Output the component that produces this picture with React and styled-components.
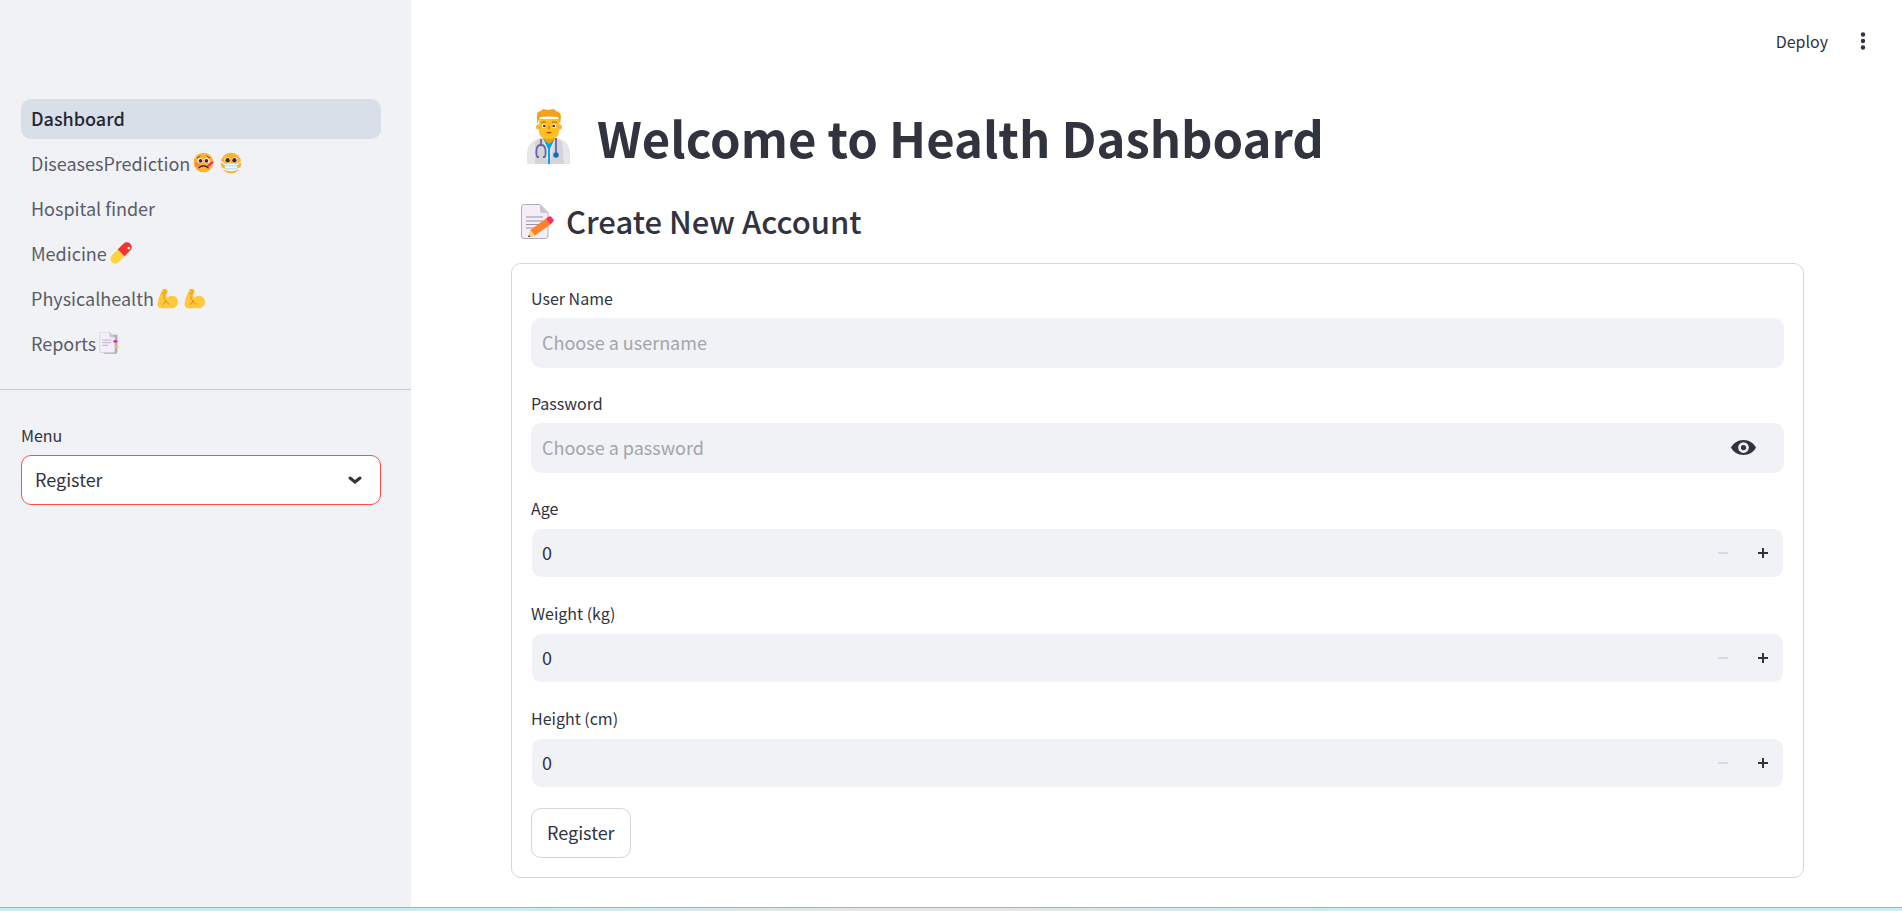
import React from "react";
import styled, { createGlobalStyle, css } from "styled-components";

const ink = "#31333f";
const fill = "#f0f2f6";
const line = "#d6d6d8";

const GlobalStyle = createGlobalStyle`
  * { box-sizing: border-box; }
  body {
    margin: 0;
    background: #fff;
    color: ${ink};
    font-family: "Noto Sans CJK SC", "Open Sans", sans-serif;
    font-size: 18px;
    line-height: 26px;
  }
  input, select, button { font: inherit; color: inherit; }
`;

const Shell = styled.div`
  display: flex;
  flex-direction: column;
  min-height: 100vh;
`;

const Body = styled.div`
  display: flex;
  flex: 1;
`;

const Sidebar = styled.aside`
  flex: 0 0 411px;
  background: ${fill};
  padding-top: 99px;
`;

const NavList = styled.nav`
  display: flex;
  flex-direction: column;
  gap: 5px;
  padding: 0 30px 25px 21px;
  border-bottom: 1px solid #c9cbd1;
`;

const NavLink = styled.a`
  display: flex;
  align-items: center;
  gap: 3px;
  height: 40px;
  padding: 0 10px 2px;
  border-radius: 10px;
  color: #5a5c68;
  text-decoration: none;
  ${(p) =>
    p.$active &&
    css`
      background: #d9dfe9;
      color: #262730;
      font-weight: 500;
    `}
`;

const Emojis = styled.span`
  display: flex;
  gap: 6px;
`;

const MenuBlock = styled.div`
  padding: 31px 30px 0 21px;
`;

const Label = styled.label`
  display: block;
  height: 34px;
  font-size: 16px;
  line-height: 28px;
`;

const SelectBox = styled.div`
  display: grid;
  align-items: center;
  > * { grid-area: 1 / 1; }
  svg { justify-self: end; margin-right: 17px; pointer-events: none; }
`;

const Select = styled.select`
  appearance: none;
  width: 100%;
  height: 50px;
  padding: 0 13px 2px;
  border: 1px solid #ff4b4b;
  border-radius: 10px;
  background: #fff;
`;

const Main = styled.main`
  flex: 1;
  min-width: 0;
  padding-bottom: 29px;
`;

const Toolbar = styled.header`
  display: flex;
  justify-content: flex-end;
  align-items: center;
  gap: 24px;
  height: 83px;
  padding: 0 28px 2px 0;
`;

const PlainButton = styled.button`
  display: flex;
  align-items: center;
  padding: 0;
  border: 0;
  background: none;
  font-size: 16px;
`;

const Content = styled.div`
  padding: 0 98px 0 100px;
`;

const Title = styled.h1`
  display: flex;
  align-items: center;
  gap: 26px;
  height: 110px;
  margin: 0;
  padding: 0 0 2px 16px;
  font-size: 49px;
  font-weight: 700;
  line-height: 66px;
`;

const Subtitle = styled.h2`
  display: flex;
  align-items: center;
  gap: 12px;
  height: 58px;
  margin: 0 0 12px;
  padding: 0 0 2px 10px;
  font-size: 31px;
  font-weight: 500;
  line-height: 42px;
`;

const Card = styled.form`
  display: flex;
  flex-direction: column;
  gap: 20px;
  padding: 20px 19px 19px;
  border: 1px solid ${line};
  border-radius: 10px;
`;

const Fields = styled.div`
  display: grid;
  gap: 21px;
`;

const Field = styled.div`
  min-width: 0;
`;

const InputBox = styled.div`
  display: flex;
  align-items: center;
  height: 50px;
  padding-right: ${(p) => p.$end}px;
  border: ${(p) => (p.$inset ? "1px solid #fff" : "0")};
  border-radius: 10px;
  background: ${fill};
  background-clip: padding-box;
`;

const Input = styled.input`
  flex: 1;
  min-width: 0;
  height: 48px;
  padding: 0 0 2px ${(p) => (p.$inset ? 10 : 11)}px;
  border: 0;
  background: none;
  outline: none;
  &::placeholder { color: #a3a5ad; opacity: 1; }
`;

const IconButton = styled.button`
  display: flex;
  align-items: center;
  justify-content: center;
  width: ${(p) => p.$w}px;
  height: 48px;
  padding: 0;
  border: 0;
  background: none;
  color: ${(p) => (p.disabled ? "#d5dae5" : ink)};
`;

const SubmitButton = styled.button`
  align-self: flex-start;
  height: 50px;
  padding: 0 15px 2px;
  border: 1px solid ${line};
  border-radius: 10px;
  background: #fff;
`;

const BottomStrip = styled.div`
  height: 4px;
  border-top: 1px solid #a3b5b9;
  background: linear-gradient(90deg, #c9ecee 28%, #e5e5e4 46%, #e5e5e4 52%, #c9ecee 70%);
`;

const FaceSick = () => (
  <svg width="21" height="21" viewBox="0 0 32 32" aria-hidden="true">
    <circle cx="16" cy="16" r="15" fill="#ffb02e" />
    <circle cx="6.500" cy="19" r="4" fill="#ff7a3d" opacity=".7" />
    <circle cx="11" cy="13" r="4" fill="#fff" />
    <circle cx="21" cy="13" r="4" fill="#fff" />
    <circle cx="11.500" cy="13.500" r="2.800" fill="#402a32" />
    <circle cx="20.500" cy="13.500" r="2.800" fill="#402a32" />
    <path d="M6.500 9q2.500-.5 4-3M25.500 9q-2.500-.5-4-3" stroke="#402a32" strokeWidth="1.300" fill="none" strokeLinecap="round" />
    <path d="M9 24q7-6 14 0" stroke="#402a32" strokeWidth="2" fill="none" strokeLinecap="round" />
    <path d="M22.500 21.500 30 15.500" stroke="#f70a8d" strokeWidth="2.500" strokeLinecap="round" />
  </svg>
);

const FaceMask = () => (
  <svg width="22" height="22" viewBox="0 0 32 32" aria-hidden="true">
    <circle cx="16" cy="16" r="15" fill="#ffb02e" />
    <path d="M1.500 14 8 18.500M30.500 14 24 18.500M3 23.500l5 2M29 23.500l-5 2" stroke="#f1f7fd" strokeWidth="2" />
    <circle cx="10.500" cy="11.500" r="4" fill="#fff" />
    <circle cx="21.500" cy="11.500" r="4" fill="#fff" />
    <circle cx="11" cy="12" r="3.200" fill="#402a32" />
    <circle cx="21" cy="12" r="3.200" fill="#402a32" />
    <path d="M7 18q9-3 18 0v8q-9 4-18 0z" fill="#f1f7fd" />
    <path d="M7 20h18M7 24.500h18" stroke="#b0dcf7" strokeWidth="1.800" />
  </svg>
);

const Pill = () => (
  <svg width="22" height="22" viewBox="0 0 32 32" aria-hidden="true">
    <g transform="rotate(45 16 16)">
      <path d="M9 16V4a7 7 0 0 1 14 0v12z" fill="#f8312f" />
      <path d="M9 16v12a7 7 0 0 0 14 0V16z" fill="#ffd23e" />
      <circle cx="19" cy="3" r="2" fill="#fff" />
    </g>
  </svg>
);

const Arm = () => (
  <svg width="21" height="21" viewBox="0 0 32 32" aria-hidden="true">
    <path d="M7 5C8 2 10 1 13 1c2 0 3 2 3.500 4.500.5 2-1 4-3 4.500l2 5c3-3 7-4 10-3 4 1 6.500 5 6.500 9 0 6-4 10-10 10H8c-5 0-8-3-7-8C2 15 5 10 7 5z" fill="#ffc83d" />
    <path d="M10 3q3.500 0 3.500 3M8 8q3-2 5 .5M10.500 10.500v4q0 3 2.500 4.500M9 25q4-1 4.500-6 1 3.500 5 6" stroke="#e08a00" strokeWidth="1.400" fill="none" strokeLinecap="round" />
  </svg>
);

const Tabs = () => (
  <svg width="21" height="22" viewBox="0 0 32 33" aria-hidden="true">
    <path d="M9 4h18q1 0 1 1v25q0 3-3 3H10q-3 0-3-2z" fill="#b4acbc" />
    <path d="M3 0h13l8 8v21q0 2-2 2H3q-2 0-2-2V2q0-2 2-2z" fill="#f3eef8" stroke="#d3cbdc" />
    <path d="M16 0v6q0 2 2 2h6z" fill="#cdc4d6" />
    <path d="M5 12h14M5 16h14M5 20h9" stroke="#bdb3c8" strokeWidth="1.500" />
    <path d="M22 14h6" stroke="#f70a8d" strokeWidth="3" />
    <path d="M25 22h5" stroke="#ffc83d" strokeWidth="3" />
  </svg>
);

const Doctor = () => (
  <svg width="44" height="56" viewBox="0 0 44 56" aria-hidden="true">
    <path d="M0 55V45C0 35 7 30 15 29h14c8 1 14 6 14 16v10z" fill="#e6e6e9" />
    <path d="M8 33q3-3 8-4l5 26H8zM35 33q-3-3-7-4l-5 26h14z" fill="#d3d3d8" />
    <path d="M16 29h12l-5 11v15h-2V40z" fill="#00a6ed" />
    <path d="M16 25h12v5l-6 5-6-5z" fill="#f59f00" />
    <path d="M12 10h20v12q0 8-10 8t-10-8z" fill="#ffc120" />
    <circle cx="11.500" cy="18" r="2.500" fill="#ffb02e" />
    <circle cx="32.500" cy="18" r="2.500" fill="#ffb02e" />
    <path d="M10 15V5q1-3 4-3l2-2 5 1 6-1 2 2q5 1 5 6l-1 7-2-7q-9-1-18 0z" fill="#f3a01b" />
    <path d="M14 14q3-2 5-.5M25 13.500q3-1.500 5 .5" stroke="#e07c00" strokeWidth="1.500" fill="none" />
    <circle cx="17" cy="17" r="2" fill="#fff" />
    <circle cx="27" cy="17" r="2" fill="#fff" />
    <circle cx="17.300" cy="17" r="1.300" fill="#402a32" />
    <circle cx="26.700" cy="17" r="1.300" fill="#402a32" />
    <path d="M22 17v3" stroke="#ef8b00" strokeWidth="2" />
    <path d="M19 23h6q-3 3-6 0z" fill="#b53a22" />
    <path d="M14 30v6M12 48h-1.500q-1.500-1-1-7 .5-5 4.500-5t4.500 5q.5 6-1 7H16M29 29v17" stroke="#6a63a8" strokeWidth="1.800" fill="none" />
    <circle cx="29" cy="46" r="2.700" fill="#1769c7" />
  </svg>
);

const Memo = () => (
  <svg width="33" height="35" viewBox="0 0 33 35" aria-hidden="true">
    <path d="M3 .5h16l8 8V32q0 2.500-2.500 2.500H3Q.5 34.500.5 32V3Q.5.5 3 .5z" fill="#f3eef8" stroke="#b4acbc" />
    <path d="M19 .5V7q0 2 2 2h6z" fill="#cdc4d6" />
    <path d="M5 13h17M5 17h17M5 20.500h13M5 24h9" stroke="#9b93a6" strokeWidth="1.200" />
    <path d="m25 14.500 4.500 6L14 31.500 7.500 33 9.500 26z" fill="#ff822d" />
    <path d="m9.500 26 4.500 5.500L7 33z" fill="#ffce7c" />
    <path d="m8 31 1.500 1.500L7 33z" fill="#402a32" />
    <path d="m25 14.500 2-1.500q2-1.500 3.500 0l1.500 2q1.500 2-.5 3.500l-2 2z" fill="#f8315f" />
  </svg>
);

const EyeIcon = () => (
  <svg width="25" height="16" viewBox="0 0 25 16" aria-hidden="true">
    <path fillRule="evenodd" fill="currentColor" d="M12.500 0C7 0 2 3.500 0 7.500 2 12 7 15 12.500 15S23 12 25 7.500C23 3.500 18 0 12.500 0zm0 2.300a5.300 5.300 0 1 1 0 10.600 5.300 5.300 0 0 1 0-10.600zm0 2.700a2.600 2.600 0 1 0 0 5.200 2.600 2.600 0 0 0 0-5.200z" />
  </svg>
);

const Minus = () => (
  <svg width="10" height="10" viewBox="0 0 10 10" aria-hidden="true">
    <path d="M0 5h10" stroke="currentColor" strokeWidth="2" />
  </svg>
);

const Plus = () => (
  <svg width="10" height="10" viewBox="0 0 10 10" aria-hidden="true">
    <path d="M0 5h10M5 0v10" stroke="currentColor" strokeWidth="2" />
  </svg>
);

const Chevron = () => (
  <svg width="18" height="18" viewBox="0 0 18 18" aria-hidden="true">
    <path d="m4 7 5 4 5-4" fill="none" stroke={ink} strokeWidth="3" strokeLinecap="round" strokeLinejoin="miter" />
  </svg>
);

const Dots = () => (
  <svg width="22" height="18" viewBox="0 0 22 18" fill={ink} aria-hidden="true">
    <circle cx="11" cy="2.500" r="2.200" />
    <circle cx="11" cy="9" r="2.200" />
    <circle cx="11" cy="15.500" r="2.200" />
  </svg>
);

const pages = [
  { name: "Dashboard", active: true },
  { name: "DiseasesPrediction", icons: [FaceSick, FaceMask] },
  { name: "Hospital finder" },
  { name: "Medicine", icons: [Pill] },
  { name: "Physicalhealth", icons: [Arm, Arm] },
  { name: "Reports", icons: [Tabs] },
];

const measures = [
  { id: "age", label: "Age" },
  { id: "weight", label: "Weight (kg)" },
  { id: "height", label: "Height (cm)" },
];

export default function App() {
  return (
    <Shell>
      <GlobalStyle />
      <Body>
        <Sidebar>
          <NavList>
            {pages.map(({ name, active, icons }) => (
              <NavLink key={name} href="#" $active={active}>
                {name}
                {icons && (
                  <Emojis>
                    {icons.map((Icon, i) => (
                      <Icon key={i} />
                    ))}
                  </Emojis>
                )}
              </NavLink>
            ))}
          </NavList>
          <MenuBlock>
            <Label htmlFor="menu">Menu</Label>
            <SelectBox>
              <Select id="menu" defaultValue="Register">
                <option>Register</option>
                <option>Login</option>
              </Select>
              <Chevron />
            </SelectBox>
          </MenuBlock>
        </Sidebar>
        <Main>
          <Toolbar>
            <PlainButton type="button">Deploy</PlainButton>
            <PlainButton type="button" aria-label="More options">
              <Dots />
            </PlainButton>
          </Toolbar>
          <Content>
            <Title>
              <Doctor />
              Welcome to Health Dashboard
            </Title>
            <Subtitle>
              <Memo />
              Create New Account
            </Subtitle>
            <Card onSubmit={(e) => e.preventDefault()}>
              <Fields>
                <Field>
                  <Label htmlFor="user">User Name</Label>
                  <InputBox $end={0}>
                    <Input id="user" type="text" placeholder="Choose a username" />
                  </InputBox>
                </Field>
                <Field>
                  <Label htmlFor="pass">Password</Label>
                  <InputBox $end={20}>
                    <Input id="pass" type="password" placeholder="Choose a password" />
                    <IconButton type="button" $w={41} aria-label="Show password">
                      <EyeIcon />
                    </IconButton>
                  </InputBox>
                </Field>
                {measures.map(({ id, label }) => (
                  <Field key={id}>
                    <Label htmlFor={id}>{label}</Label>
                    <InputBox $inset $end={0}>
                      <Input id={id} type="text" inputMode="numeric" defaultValue="0" $inset />
                      <IconButton type="button" $w={40} disabled aria-label={`Decrease ${label}`}>
                        <Minus />
                      </IconButton>
                      <IconButton type="button" $w={40} aria-label={`Increase ${label}`}>
                        <Plus />
                      </IconButton>
                    </InputBox>
                  </Field>
                ))}
              </Fields>
              <SubmitButton type="submit">Register</SubmitButton>
            </Card>
          </Content>
        </Main>
      </Body>
      <BottomStrip />
    </Shell>
  );
}
